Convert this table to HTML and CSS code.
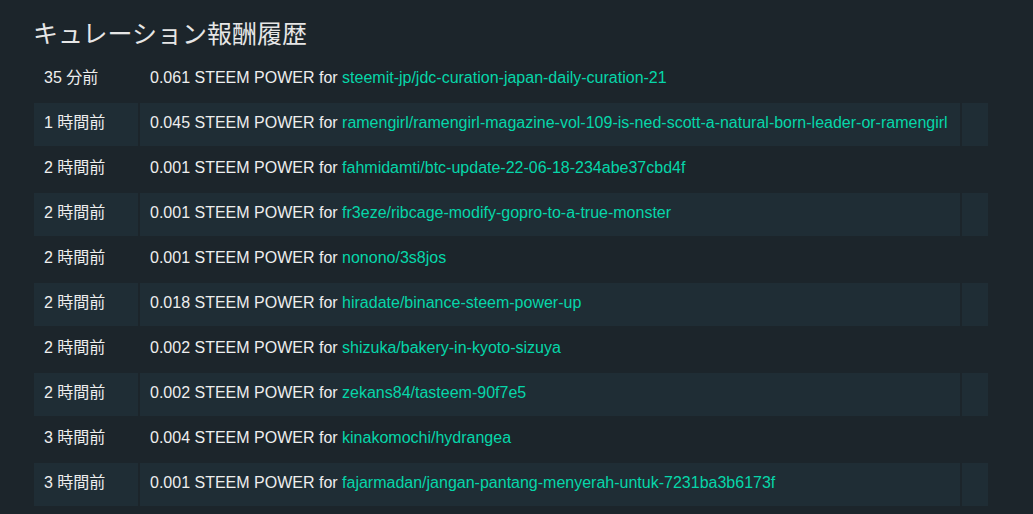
FILE: index.html
```html
<!DOCTYPE html>
<html lang="ja">
<head>
  <meta charset="UTF-8">
  <title>キュレーション報酬履歴</title>
  <link rel="stylesheet" href="styles.css">
</head>
<body>
  <div class="rewards">
    <h2>キュレーション報酬履歴</h2>
    <table class="history">
      <tbody>
        <tr><td class="when">35 分前</td><td>0.061 STEEM POWER for <a href="#">steemit-jp/jdc-curation-japan-daily-curation-21</a></td><td></td></tr>
        <tr><td class="when">1 時間前</td><td>0.045 STEEM POWER for <a href="#">ramengirl/ramengirl-magazine-vol-109-is-ned-scott-a-natural-born-leader-or-ramengirl</a></td><td></td></tr>
        <tr><td class="when">2 時間前</td><td>0.001 STEEM POWER for <a href="#">fahmidamti/btc-update-22-06-18-234abe37cbd4f</a></td><td></td></tr>
        <tr><td class="when">2 時間前</td><td>0.001 STEEM POWER for <a href="#">fr3eze/ribcage-modify-gopro-to-a-true-monster</a></td><td></td></tr>
        <tr><td class="when">2 時間前</td><td>0.001 STEEM POWER for <a href="#">nonono/3s8jos</a></td><td></td></tr>
        <tr><td class="when">2 時間前</td><td>0.018 STEEM POWER for <a href="#">hiradate/binance-steem-power-up</a></td><td></td></tr>
        <tr><td class="when">2 時間前</td><td>0.002 STEEM POWER for <a href="#">shizuka/bakery-in-kyoto-sizuya</a></td><td></td></tr>
        <tr><td class="when">2 時間前</td><td>0.002 STEEM POWER for <a href="#">zekans84/tasteem-90f7e5</a></td><td></td></tr>
        <tr><td class="when">3 時間前</td><td>0.004 STEEM POWER for <a href="#">kinakomochi/hydrangea</a></td><td></td></tr>
        <tr><td class="when">3 時間前</td><td>0.001 STEEM POWER for <a href="#">fajarmadan/jangan-pantang-menyerah-untuk-7231ba3b6173f</a></td><td></td></tr>
      </tbody>
    </table>
  </div>
</body>
</html>
```

FILE: styles.css
```css
body {
  background-color: #1c252b;
  color: #eeeeee;
  font-family: "Liberation Sans", "Noto Sans CJK JP", sans-serif;
  margin: 0;
}
.rewards {
  padding: 17px 43px 0 32px;
}
h2 {
  font-family: "Noto Sans CJK JP", sans-serif;
  font-weight: 400;
  font-size: 25px;
  line-height: 30px;
  color: #e6e6e6;
  margin: 0 0 9px 1px;
}
.history {
  width: 958px;
  border-spacing: 2px;
  font-size: 16px;
}
.history td {
  height: 40px;
  padding: 0 10px 3px;
  line-height: 18px;
  vertical-align: middle;
  white-space: nowrap;
}
.history td.when {
  width: 84px;
}
.history td:last-child {
  width: 6px;
}
.history tr:nth-child(even) td {
  background-color: #1f2d35;
}
.history a {
  color: #06d6a9;
  text-decoration: none;
}
```
